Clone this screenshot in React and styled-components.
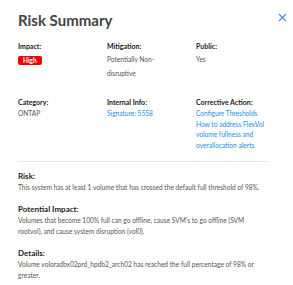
import React from "react";
import styled, { createGlobalStyle } from "styled-components";

const GlobalStyle = createGlobalStyle`
  body {
    margin: 0;
    background: #ffffff;
    font-family: Lato, "Liberation Sans", sans-serif;
  }
`;

const Panel = styled.div`
  width: 293px;
  height: 285px;
  box-sizing: border-box;
  padding: 10px 6px 0 18px;
  background: #fff;
  overflow: hidden;
`;

const Header = styled.div`
  display: flex;
  justify-content: space-between;
  align-items: flex-start;
`;

const Title = styled.h2`
  margin: 0;
  font-size: 15px;
  line-height: 20px;
  font-weight: 700;
  color: #444;
`;

const Close = styled.button`
  border: 0;
  background: none;
  padding: 0;
  margin-top: 3px;
  width: 9px;
  height: 9px;
  cursor: pointer;
  display: flex;
`;

const Body = styled.div`
  width: 250px;
`;

const Grid = styled.div`
  display: grid;
  grid-template-columns: 70px 70px 85px;
  column-gap: 19px;
  row-gap: 17px;
  margin-top: 11px;
`;

const Field = styled.div`
  display: flex;
  flex-direction: column;
  align-items: flex-start;
`;

const Label = styled.div`
  font-size: 7px;
  line-height: 10px;
  font-weight: 700;
  color: #222;
  margin-bottom: 1px;
  white-space: nowrap;
`;

const Value = styled.div`
  font-size: 6.6px;
  line-height: ${(p) => p.$lh || 11}px;
  color: #555;
`;

const Link = styled.a`
  display: block;
  font-size: 6.6px;
  line-height: 10.7px;
  color: #1a8ee8;
  text-decoration: none;
`;

const Badge = styled.span`
  display: inline-block;
  margin-top: 4px;
  padding: 0 5px;
  height: 9px;
  line-height: 9px;
  border-radius: 2px;
  background: #f40000;
  color: #fff;
  font-size: 6.5px;
  font-weight: 700;
`;

const Divider = styled.hr`
  border: 0;
  border-top: 1px solid #e6e6e6;
  margin: 10px 0 9px;
`;

const Section = styled.div`
  margin-bottom: 11px;
`;

const SectionTitle = styled.div`
  font-size: 8px;
  line-height: 10px;
  font-weight: 700;
  color: #222;
  margin-bottom: 1px;
`;

const SectionText = styled.p`
  margin: 0;
  font-size: 6.6px;
  line-height: 11px;
  color: #555;
`;

export default function App() {
  return (
    <Panel>
      <GlobalStyle />
      <Header>
        <Title>Risk Summary</Title>
        <Close aria-label="close">
          <svg width="9" height="9" viewBox="0 0 9 9">
            <path d="M1 1 L8 8 M8 1 L1 8" stroke="#4a90e2" strokeWidth="1.2" />
          </svg>
        </Close>
      </Header>
      <Body>
        <Grid>
          <Field>
            <Label>Impact:</Label>
            <Badge>High</Badge>
          </Field>
          <Field>
            <Label>Mitigation:</Label>
            <Value $lh={14}>Potentially Non-disruptive</Value>
          </Field>
          <Field>
            <Label>Public:</Label>
            <Value $lh={14}>Yes</Value>
          </Field>
          <Field>
            <Label>Category:</Label>
            <Value>ONTAP</Value>
          </Field>
          <Field>
            <Label>Internal Info:</Label>
            <Link href="#">Signature: 5558</Link>
          </Field>
          <Field>
            <Label>Corrective Action:</Label>
            <Link href="#">Configure Thresholds</Link>
            <Link href="#">How to address FlexVol volume fullness and overallocation alerts</Link>
          </Field>
        </Grid>
        <Divider />
        <Section>
          <SectionTitle>Risk:</SectionTitle>
          <SectionText>
            This system has at least 1 volume that has crossed the default full threshold of 98%.
          </SectionText>
        </Section>
        <Section>
          <SectionTitle>Potential Impact:</SectionTitle>
          <SectionText>
            Volumes that become 100% full can go offline, cause SVM's to go offline (SVM rootvol), and cause system disruption (vol0).
          </SectionText>
        </Section>
        <Section>
          <SectionTitle>Details:</SectionTitle>
          <SectionText>
            Volume voloradbx02prd_hpdb2_arch02 has reached the full percentage of 98% or greater.
          </SectionText>
        </Section>
      </Body>
    </Panel>
  );
}
